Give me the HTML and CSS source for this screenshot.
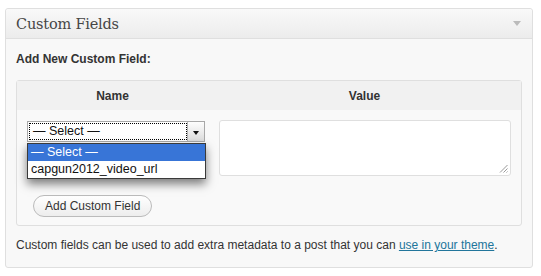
FILE: index.html
```html
<!DOCTYPE html>
<html>
<head>
<meta charset="utf-8">
<link rel="stylesheet" href="styles.css">
</head>
<body>
<div class="postbox">
  <div class="hndle">
    <h3 class="title">Custom Fields</h3>
    <span class="toggle"></span>
  </div>
  <div class="inside">
    <h4 class="add-title">Add New Custom Field:</h4>
    <div class="meta-box">
      <div class="meta-head">
        <div class="col-name">Name</div>
        <div class="col-value">Value</div>
      </div>
      <div class="meta-row">
        <div class="cell-name">
          <div class="select">
            <div class="select-label">— Select —</div>
            <div class="select-arrow"><span class="tri"></span></div>
          </div>
          <div class="dropdown">
            <div class="opt opt-active">— Select —</div>
            <div class="opt">capgun2012_video_url</div>
          </div>
        </div>
        <div class="cell-value">
          <div class="textarea">
            <svg class="grip" width="9" height="9" viewBox="0 0 9 9"><path d="M8.5 1 L1 8.5 M8.5 4.5 L4.5 8.5 M8.5 7.5 L7.5 8.5" stroke="#999" stroke-width="1" fill="none"/></svg>
          </div>
        </div>
      </div>
      <div class="meta-submit">
        <button class="button">Add Custom Field</button>
      </div>
    </div>
    <p class="note">Custom fields can be used to add extra metadata to a post that you can <a href="#">use in your theme</a>.</p>
  </div>
</div>
</body>
</html>
```
FILE: styles.css
```css
html, body {
  margin: 0;
  padding: 0;
  background: #ffffff;
}
body {
  font-family: "Liberation Sans", Arial, sans-serif;
  font-size: 12px;
  color: #333;
}
.postbox {
  margin: 8px 0 0 5px;
  width: 526px;
  border: 1px solid #dfdfdf;
  border-radius: 3px;
  background: #f8f8f8;
  box-shadow: 0 1px 0 #fff inset;
}
.hndle {
  height: 29px;
  display: flex;
  align-items: center;
  justify-content: space-between;
  padding: 0 10px;
  background: linear-gradient(to bottom, #f9f9f9, #ececec);
  border-bottom: 1px solid #dfdfdf;
  border-radius: 3px 3px 0 0;
}
.title {
  margin: 0;
  font-family: "DejaVu Serif", Georgia, serif;
  font-weight: normal;
  font-size: 14.5px;
  color: #464646;
  letter-spacing: -0.2px;
}
.toggle {
  width: 0;
  height: 0;
  border-left: 4px solid transparent;
  border-right: 4px solid transparent;
  border-top: 5px solid #bbb;
  margin-right: 1px;
}
.inside {
  padding: 0 10px 14px 10px;
}
.add-title {
  margin: 12px 0 13px 0;
  font-size: 12px;
  line-height: 16px;
  font-weight: bold;
  color: #333;
}
.meta-box {
  border: 1px solid #dfdfdf;
  border-radius: 3px;
  background: #f9f9f9;
}
.meta-head {
  display: flex;
  height: 29px;
  align-items: center;
  background: #f1f1f1;
  font-weight: bold;
  color: #333;
}
.col-name {
  width: 191px;
  text-align: center;
}
.col-value {
  flex: 1;
  text-align: center;
}
.meta-row {
  display: flex;
  padding-top: 10px;
}
.cell-name {
  width: 191px;
  padding-left: 10px;
  box-sizing: border-box;
  position: relative;
}
.cell-value {
  flex: 1;
  padding: 0 10px 0 11px;
}
.select {
  margin-top: 1px;
  width: 178px;
  height: 21px;
  box-sizing: border-box;
  border: 1px solid #a8a8a8;
  background: #fff;
  display: flex;
}
.select-label {
  flex: 1;
  border: 1px dotted #000;
  margin: 1px 0 1px 1px;
  line-height: 15px;
  padding-left: 3px;
  font-size: 12.5px;
  color: #111;
}
.select-arrow {
  width: 16px;
  border-left: 1px solid #b5b5b5;
  background: linear-gradient(to bottom, #fdfdfd, #dcdcdc);
  display: flex;
  align-items: center;
  justify-content: center;
}
.tri {
  width: 0;
  height: 0;
  border-left: 3px solid transparent;
  border-right: 3px solid transparent;
  border-top: 4px solid #111;
  margin-top: 2px;
}
.dropdown {
  position: absolute;
  left: 10px;
  top: 23px;
  width: 179px;
  box-sizing: border-box;
  border: 1px solid #3a3a3a;
  background: #fff;
  box-shadow: 0 5px 9px rgba(0, 0, 0, 0.5);
  z-index: 2;
}
.opt {
  height: 17px;
  line-height: 17px;
  padding-left: 3px;
  font-size: 12.5px;
  color: #111;
}
.opt-active {
  background: #3875d7;
  color: #fff;
}
.textarea {
  height: 56px;
  box-sizing: border-box;
  border: 1px solid #dfdfdf;
  border-radius: 3px;
  background: #fff;
  position: relative;
}
.grip {
  position: absolute;
  right: 2px;
  bottom: 2px;
}
.meta-submit {
  padding: 19px 0 8px 16px;
}
.button {
  font-family: "Liberation Sans", Arial, sans-serif;
  font-size: 12px;
  color: #333;
  height: 22px;
  padding: 0 11px;
  border: 1px solid #bbb;
  border-radius: 11px;
  background: linear-gradient(to bottom, #ffffff, #ededed);
}
.note {
  margin: 11px 0 0 0;
  line-height: 16px;
  font-size: 12px;
  color: #333;
}
.note a {
  color: #21759b;
}
```
